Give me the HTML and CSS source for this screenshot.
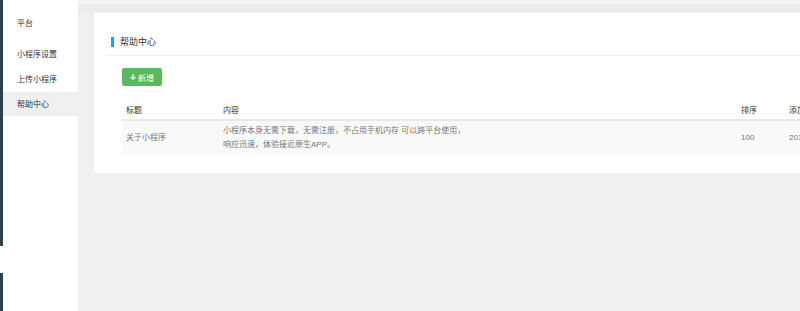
FILE: index.html
```html
<!DOCTYPE html>
<html lang="zh-CN">

<head>
    <meta charset="UTF-8">
    <title>帮助中心</title>
    <link rel="stylesheet" href="styles.css">
</head>

<body>
    <div class="page">
        <div class="nav_bar">
            <div class="nav_top"></div>
            <div class="nav_bottom"></div>
        </div>
        <div class="side">
            <div class="side_title">平台</div>
            <ul class="menu">
                <li><a href="#">小程序设置</a></li>
                <li><a href="#">上传小程序</a></li>
                <li class="active"><a href="#">帮助中心</a></li>
            </ul>
        </div>
        <div class="main">
            <div class="card">
                <div class="card_head">
                    <span class="mark"></span>
                    <span>帮助中心</span>
                </div>
                <div class="card_body">
                    <button class="btn_add"><b>+</b> 新增</button>
                    <table class="list">
                        <colgroup>
                            <col class="c_title">
                            <col class="c_content">
                            <col class="c_sort">
                            <col class="c_time">
                        </colgroup>
                        <thead>
                            <tr>
                                <th>标题</th>
                                <th>内容</th>
                                <th>排序</th>
                                <th>添加时间</th>
                            </tr>
                        </thead>
                        <tbody>
                            <tr>
                                <td>关于小程序</td>
                                <td>小程序本身无需下载，无需注册，不占用手机内存 可以跨平台使用，<br>响应迅速，体验接近原生APP。</td>
                                <td>100</td>
                                <td>2018-05-21</td>
                            </tr>
                        </tbody>
                    </table>
                </div>
            </div>
        </div>
    </div>
</body>

</html>
```

FILE: styles.css
```css
html,
body {
    margin: 0;
    height: 100%;
    overflow: hidden;
}

body {
    background: #f0f0f0;
    font-family: "Liberation Sans", "Noto Sans CJK SC", sans-serif;
    color: #333;
}

a {
    text-decoration: none;
    color: #333;
}

.page {
    display: flex;
    height: 311px;
}

.nav_bar {
    width: 3px;
    display: flex;
    flex-direction: column;
    background: #fff;
}

.nav_top {
    height: 246px;
    background: #2f4050;
}

.nav_bottom {
    flex: 1;
    margin-top: 27px;
    background: #2f4050;
}

.side {
    width: 75px;
    background: #fff;
}

.side_title {
    height: 42px;
    padding: 17px 0 0 14px;
    box-sizing: border-box;
    font-size: 8px;
}

.menu {
    margin: 0;
    padding: 0;
    list-style: none;
}

.menu li {
    height: 25px;
    line-height: 25px;
    padding-left: 14px;
    font-size: 8px;
}

.menu li:first-child {
    line-height: 26px;
}

.menu li.active {
    height: 24px;
    line-height: 25px;
    background: #f0f0f0;
}

.main {
    flex: 1;
    padding: 13px 0 0 16px;
    background: linear-gradient(#f5f5f5 0, #f5f5f5 4px, #ececec 4px, #ececec 12px, #f0f0f0 12px);
    background-repeat: no-repeat;
    background-color: #f0f0f0;
    overflow: hidden;
}

.card {
    width: 760px;
    height: 160px;
    background: #fff;
}

.card_head {
    height: 43px;
    margin-left: 13px;
    padding-top: 16px;
    box-sizing: border-box;
    border-bottom: 1px solid #f2f2f2;
    display: flex;
    align-items: center;
    gap: 6px;
    font-size: 9px;
    color: #333;
}

.card_head span {
    line-height: 26px;
}

.mark {
    width: 3px;
    height: 10px;
    margin-left: 4px;
    background: #1e9fff;
}

.card_body {
    padding: 12px 0 18px 28px;
}

.btn_add {
    display: block;
    width: 40px;
    height: 18px;
    padding: 0;
    border: none;
    border-radius: 2px;
    background: #5cb85c;
    color: #fff;
    font: normal 8px "Liberation Sans", "Noto Sans CJK SC", sans-serif;
}

.btn_add b {
    font-size: 10px;
}

.list {
    margin-top: 13px;
    width: 780px;
    table-layout: fixed;
    border-collapse: collapse;
    font-size: 8px;
}

.c_title {
    width: 97px;
}

.c_content {
    width: 518px;
}

.c_sort {
    width: 48px;
}

.list th {
    height: 20px;
    padding: 0 4px;
    text-align: left;
    font-weight: normal;
    color: #333;
    border-bottom: 2px solid #e8e8e8;
}

.list td {
    height: 34px;
    padding: 0 4px;
    line-height: 14px;
    color: #777;
    background: #f9f9f9;
}
```
